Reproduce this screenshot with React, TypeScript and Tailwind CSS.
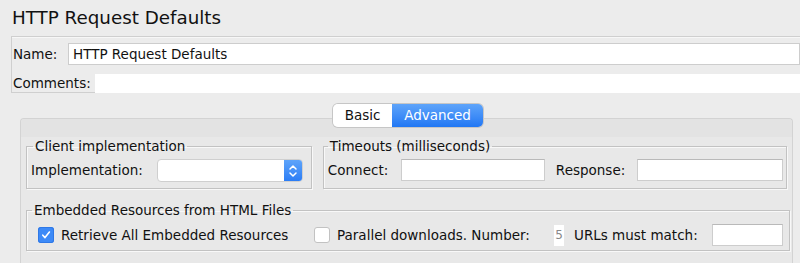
import React from "react";

function Checkbox({ checked }: { checked?: boolean }) {
  if (checked) {
    return (
      <span className="flex h-[16px] w-[16px] items-center justify-center rounded-[3px] bg-[#3d8af7] shadow-[inset_0_0_0_1px_#2f78e6]">
        <svg width="10" height="10" viewBox="0 0 10 10">
          <path d="M1.8 5.2 L4 7.6 L8.4 2" stroke="white" strokeWidth="1.6" fill="none" strokeLinecap="round" strokeLinejoin="round" />
        </svg>
      </span>
    );
  }
  return <span className="block h-[16px] w-[16px] rounded-[3px] border border-[#c2c2c2] bg-white" />;
}

function Field({ className }: { className: string }) {
  return <div className={`h-[22px] border border-[#cdcdcd] border-t-[#b9b9b9] bg-white ${className}`} />;
}

export default function App() {
  return (
    <div className="h-[263px] w-[800px] overflow-hidden bg-[#ececec] font-['DejaVu_Sans',sans-serif] text-[13.5px] text-[#111]">
      <h1 className="pl-[12px] pt-[5px] text-[18.3px] leading-[26px]">HTTP Request Defaults</h1>

      {/* Name / comments */}
      <div className="ml-[11px] mt-[5px] h-[57px] border border-r-0 border-[#cfcfcf] shadow-[inset_0_1px_0_#f7f7f7]">
        <div className="flex h-[28px] items-center pt-[6px]">
          <span className="w-[56px] pl-[1px]">Name:</span>
          <div className="flex h-[22px] flex-1 items-center border border-[#cdcdcd] bg-white pl-[4px]">HTTP Request Defaults</div>
        </div>
        <div className="mt-[9px] flex h-[19px] items-center">
          <span className="w-[83px] pl-[1px]">Comments:</span>
          <div className="h-[19px] flex-1 bg-white" />
        </div>
      </div>

      {/* Tabs */}
      <div className="relative z-10 mt-[11px] flex justify-center">
        <div className="ml-[16px] flex h-[23px] overflow-hidden rounded-[5px] shadow-[0_0_0_1px_#c6c6c6]">
          <div className="flex w-[59px] items-center justify-center bg-white">Basic</div>
          <div className="flex w-[91px] items-center justify-center bg-gradient-to-b from-[#5ea4fa] to-[#2077f4] text-white">Advanced</div>
        </div>
      </div>

      <div className="-mt-[9px] ml-[20px] mr-[7px] h-[160px] rounded-t-[4px] border border-b-0 border-[#d3d3d3] bg-[#e8e8e8]">
        <div className="h-[18px] rounded-t-[4px] bg-[#e3e3e3]" />
        <div className="px-[5px]">
          <div className="flex gap-[11px]">
            <fieldset className="h-[52px] w-[287px] border border-[#c2c2c2] pl-[4px] pr-0 shadow-[inset_1px_1px_0_#f8f8f8,1px_1px_0_#f8f8f8]">
              <legend className="ml-[2px] px-[2px] leading-[18px]">Client implementation</legend>
              <div className="mt-[4px] flex items-center">
                <span className="w-[126px] whitespace-nowrap">Implementation:</span>
                <div className="flex h-[23px] w-[146px] overflow-hidden rounded-[4px] border border-[#cfcfcf] bg-white">
                  <div className="flex-1" />
                  <div className="flex w-[18px] items-center justify-center bg-gradient-to-b from-[#5ea4fa] to-[#2b7df5]">
                    <svg width="10" height="14" viewBox="0 0 10 14">
                      <path d="M2 5 L5 2 L8 5 M2 9 L5 12 L8 9" stroke="white" strokeWidth="1.5" fill="none" strokeLinecap="round" strokeLinejoin="round" />
                    </svg>
                  </div>
                </div>
              </div>
            </fieldset>

            <fieldset className="h-[52px] w-[466px] border border-[#c2c2c2] pl-[4px] pr-0 shadow-[inset_1px_1px_0_#f8f8f8,1px_1px_0_#f8f8f8]">
              <legend className="ml-[0px] px-[2px] leading-[18px]">Timeouts (milliseconds)</legend>
              <div className="mt-[4px] flex items-center">
                <span className="w-[73px] whitespace-nowrap">Connect:</span>
                <Field className="w-[144px]" />
                <span className="ml-[11px] w-[81px] whitespace-nowrap">Response:</span>
                <Field className="w-[146px]" />
              </div>
            </fieldset>
          </div>

          <fieldset className="mt-[12px] h-[50px] w-[764px] border border-[#c2c2c2] pl-[11px] pr-0 shadow-[inset_1px_1px_0_#f8f8f8,1px_1px_0_#f8f8f8]">
            <legend className="ml-[-6px] px-[2px] leading-[18px]">Embedded Resources from HTML Files</legend>
            <div className="mt-[5px] flex items-center whitespace-nowrap">
              <Checkbox checked />
              <span className="ml-[7px] w-[231px]">Retrieve All Embedded Resources</span>
              <span className="ml-[22px]"><Checkbox /></span>
              <span className="ml-[7px] w-[201px]">Parallel downloads. Number:</span>
              <div className="ml-[16px] flex h-[21px] w-[10px] items-center justify-center bg-white text-[12px] text-[#888]">5</div>
              <span className="ml-[10px] w-[128px]">URLs must match:</span>
              <Field className="ml-[10px] w-[71px]" />
            </div>
          </fieldset>
        </div>
      </div>
    </div>
  );
}
